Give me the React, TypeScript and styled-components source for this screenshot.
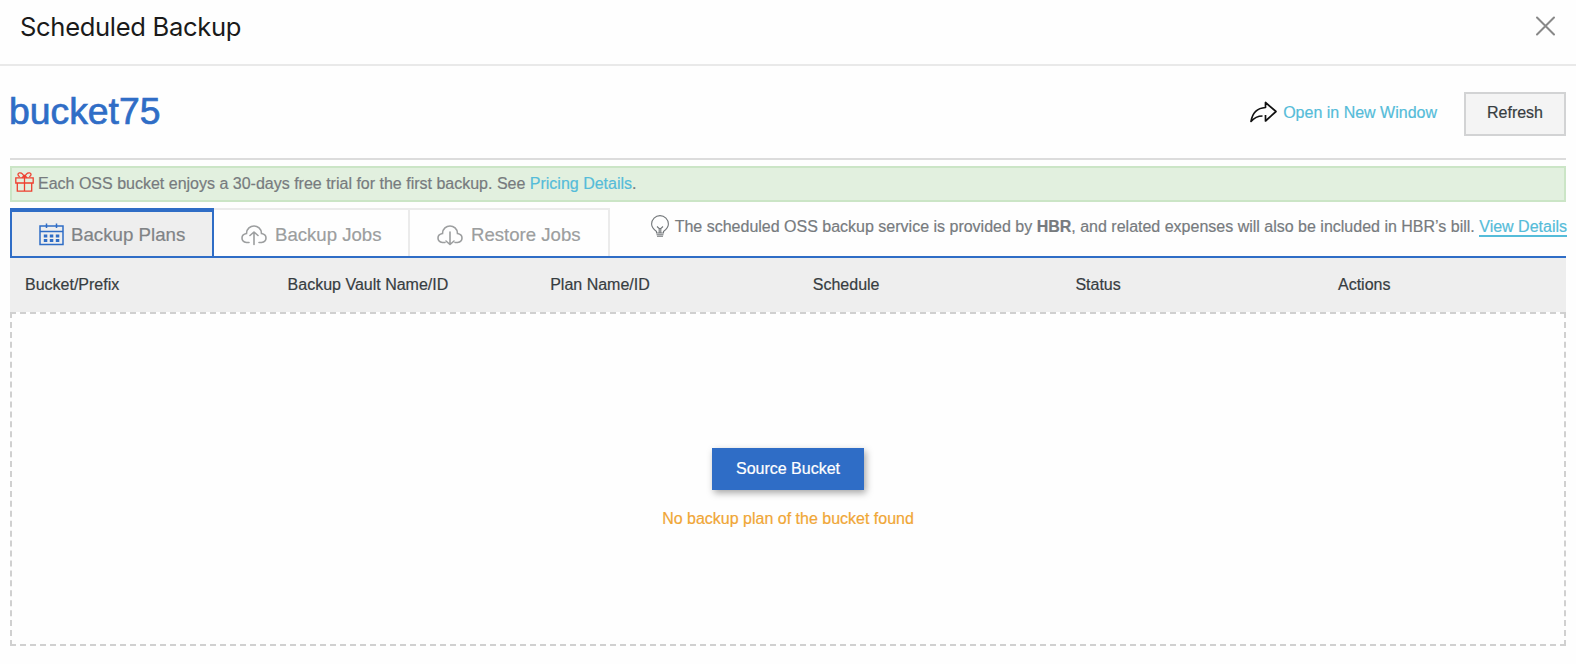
import React from "react";
import styled, { createGlobalStyle, css } from "styled-components";

const Global = createGlobalStyle`
  * { box-sizing: border-box; }
  body {
    margin: 0; background: #fefefe; font-family: "Liberation Sans", sans-serif; font-size: 16px; color: #777b7e;
    overflow: hidden; -webkit-text-stroke-width: 0.2px;
  }
`;
const Panel = styled.main`
  display: flex; flex-direction: column; height: 664px; white-space: nowrap;
`;
const Header = styled.header`
  display: flex; justify-content: space-between; align-items: flex-start;
  height: 66px; padding: 9px 20px 0; border-bottom: 2px solid #e9e9e9;
`;
const Title = styled.h1`
  margin: 0; font: 400 25.6px/36px Inter, sans-serif; letter-spacing: -0.34px; color: #1a1a1a;
  -webkit-text-stroke-width: 0;
`;
const CloseButton = styled.button`
  display: flex; padding: 0; border: 0; background: none; margin-top: 6px;
`;
const Content = styled.section`
  display: flex; flex-direction: column; padding: 0 10px;
`;
const BucketBar = styled.div`
  display: flex; align-items: center; height: 94px; padding-top: 4px; border-bottom: 2px solid #dcdcdc;
`;
const BucketName = styled.h2`
  margin: 0 auto 6px -1px; font-size: 37.3px; font-weight: 400; line-height: 44px; color: #2f6dc6;
  -webkit-text-stroke-width: 0.7px;
`;
const Link = styled.a<{ $underlined?: boolean }>`
  color: #55bcd9;
  ${(p) => p.$underlined && css`border-bottom: 2px solid #55bcd9;`}
`;
const OpenLink = styled.div`
  display: flex; align-items: center; gap: 6px; margin: 0 27px 2px 0; line-height: 20px;
`;
const ShareSlot = styled.span`
  display: flex; padding-bottom: 2px;
`;
const RefreshButton = styled.button`
  width: 102px; height: 44px; padding: 0 0 2px; border: 2px solid #d2d3d4; background: #f4f4f4;
  font: inherit; color: #373d41;
`;
const Notice = styled.div`
  display: flex; align-items: center; height: 36px; margin-top: 6px; padding-left: 3px;
  border: 2px solid #cbe5c6; background: #e2f0df;
`;
const GiftSlot = styled.span`
  display: flex; margin: 0 4px 4px 0;
`;
const TabBar = styled.nav`
  display: flex; height: 50px; margin-top: 6px; border-bottom: 2px solid #2f6dc6;
`;
const Tab = styled.div<{ $width: number; $active?: boolean }>`
  display: flex; align-items: center; gap: 8px; width: ${(p) => p.$width}px; padding: 3px 0 0 27px;
  border-top: 2px solid #ebebeb; border-right: 2px solid #ebebeb;
  font-size: 18.6px; color: #9c9e9f;
  ${(p) => p.$active && css`
    gap: 7px; padding: 1px 0 0 27px; border: 2px solid #2f6dc6; border-top-width: 4px; border-bottom: 0;
    background: #eee; font-size: 18.7px; color: #808386;
  `}
`;
const Tip = styled.div`
  display: flex; align-items: flex-start; margin: 7px -1px 0 auto; line-height: 20px;
`;
const TipText = styled.span`
  margin: 2px 0 0 6px;
`;
const TableHead = styled.div`
  display: grid; grid-template-columns: repeat(5, 262.6px) 1fr; align-items: center;
  height: 54px; padding: 0 0 0 15px; background: #eee; color: #373d41;
`;
const Empty = styled.div`
  display: flex; flex-direction: column; align-items: center; height: 334px; padding-top: 134px;
  border: 2px dashed #d0d0d0;
`;
const SourceButton = styled.button`
  width: 152px; height: 42px; padding: 0; border: 0; background: #2f6dc6; color: #fff; font: inherit;
  box-shadow: 2px 3px 7px rgba(0, 0, 0, 0.35);
`;
const EmptyText = styled.p`
  margin: 19px 0 0; line-height: 20px; color: #f0a636;
`;

const CloseIcon = () => (
  <svg width="22" height="22" viewBox="0 0 22 22" fill="none" stroke="#888" strokeWidth="2" strokeLinecap="round">
    <path d="M3 2.500 20 19.500M20 2.500 3 19.500" />
  </svg>
);
const ShareIcon = () => (
  <svg width="27" height="22" viewBox="0 0 27 22" fill="none" stroke="#111" strokeWidth="1.7" strokeLinejoin="round">
    <path d="M15.500 14V20L26 10.500 15.500 1.500V6.500C8 7 2.500 11 1 20.500C4 17 7 15 12.500 15" />
  </svg>
);
const GiftIcon = () => (
  <svg width="19" height="20" viewBox="0 0 19 20" fill="none" stroke="#ee4030" strokeWidth="1.3">
    <path d="M.8 5.800H18.200V11H.8ZM2.300 11V19.200H16.700V11M9.500 5.800V19.200" />
    <path d="M9.500 5.800C8.500 2 6.500 .6 4.500 .8C2.500 1 2.300 4 4.800 4.600M9.500 5.800C10.500 2 12.500 .6 14.500 .8C16.500 1 16.700 4 14.200 4.600M7 5.800 9.500 3.500 12 5.800" />
  </svg>
);
const CalendarIcon = () => (
  <svg width="25" height="23" viewBox="0 0 25 23" fill="none" stroke="#2f6dc6" strokeWidth="1.5">
    <path d="M1 3H24V21.500H1ZM1 8.500H24M7.500 .5V5M17.500 .5V5" />
    <path d="M4.800 13H8.300M10.800 13H14.300M16.800 13H20.300M4.800 17.500H8.300M10.800 17.500H14.300M16.800 17.500H20.300" strokeWidth="3" />
  </svg>
);
const CloudIcon = ({ down }: { down?: boolean }) => (
  <svg width="26" height="22" viewBox="0 0 26 22" fill="none" stroke="#9c9e9f" strokeWidth="1.6" strokeLinecap="round">
    <path d="M8 18.500H5.500C-.5 17.500-.5 10.500 5.500 9.500C5.500 4.500 9.500 2 13 2C16.500 2 20.500 4.500 20.500 9.500C26.500 10.500 26.500 17.500 20.500 18.500H18" />
    <path d={down ? "M13 8V20.500M9 17 13 20.500 17 17" : "M13 20.500V8M9 11.500 13 8 17 11.500"} />
  </svg>
);
const BulbIcon = () => (
  <svg width="18" height="22" viewBox="0 0 18 22" fill="none" stroke="#73777a" strokeWidth="1.1">
    <path d="M5.500 18V16.500C1.500 13.500 .6 11 .6 9A8.400 8.400 0 0 1 17.400 9C17.400 11 16.500 13.500 12.500 16.500V18Z" />
    <path d="M6 11.500 8.200 13.500V18M12 11.500 9.800 13.500V18M8.200 13.500H9.800M5.500 19.700H12.500M6 21.300H12" />
  </svg>
);

const COLUMNS = ["Bucket/Prefix", "Backup Vault Name/ID", "Plan Name/ID", "Schedule", "Status", "Actions"];

export default function App() {
  return (
    <>
      <Global />
      <Panel>
        <Header>
          <Title>Scheduled Backup</Title>
          <CloseButton aria-label="Close"><CloseIcon /></CloseButton>
        </Header>
        <Content>
          <BucketBar>
            <BucketName>bucket75</BucketName>
            <OpenLink><ShareSlot><ShareIcon /></ShareSlot><Link>Open in New Window</Link></OpenLink>
            <RefreshButton>Refresh</RefreshButton>
          </BucketBar>
          <Notice>
            <GiftSlot><GiftIcon /></GiftSlot>
            <span>Each OSS bucket enjoys a 30-days free trial for the first backup. See <Link>Pricing Details</Link>.</span>
          </Notice>
          <TabBar>
            <Tab $width={204} $active><CalendarIcon />Backup Plans</Tab>
            <Tab $width={196}><CloudIcon />Backup Jobs</Tab>
            <Tab $width={200}><CloudIcon down />Restore Jobs</Tab>
            <Tip>
              <BulbIcon />
              <TipText>The scheduled OSS backup service is provided by <b>HBR</b>, and related expenses will also be included in HBR’s bill. <Link $underlined>View Details</Link></TipText>
            </Tip>
          </TabBar>
          <TableHead>{COLUMNS.map((name) => <span key={name}>{name}</span>)}</TableHead>
          <Empty>
            <SourceButton>Source Bucket</SourceButton>
            <EmptyText>No backup plan of the bucket found</EmptyText>
          </Empty>
        </Content>
      </Panel>
    </>
  );
}
